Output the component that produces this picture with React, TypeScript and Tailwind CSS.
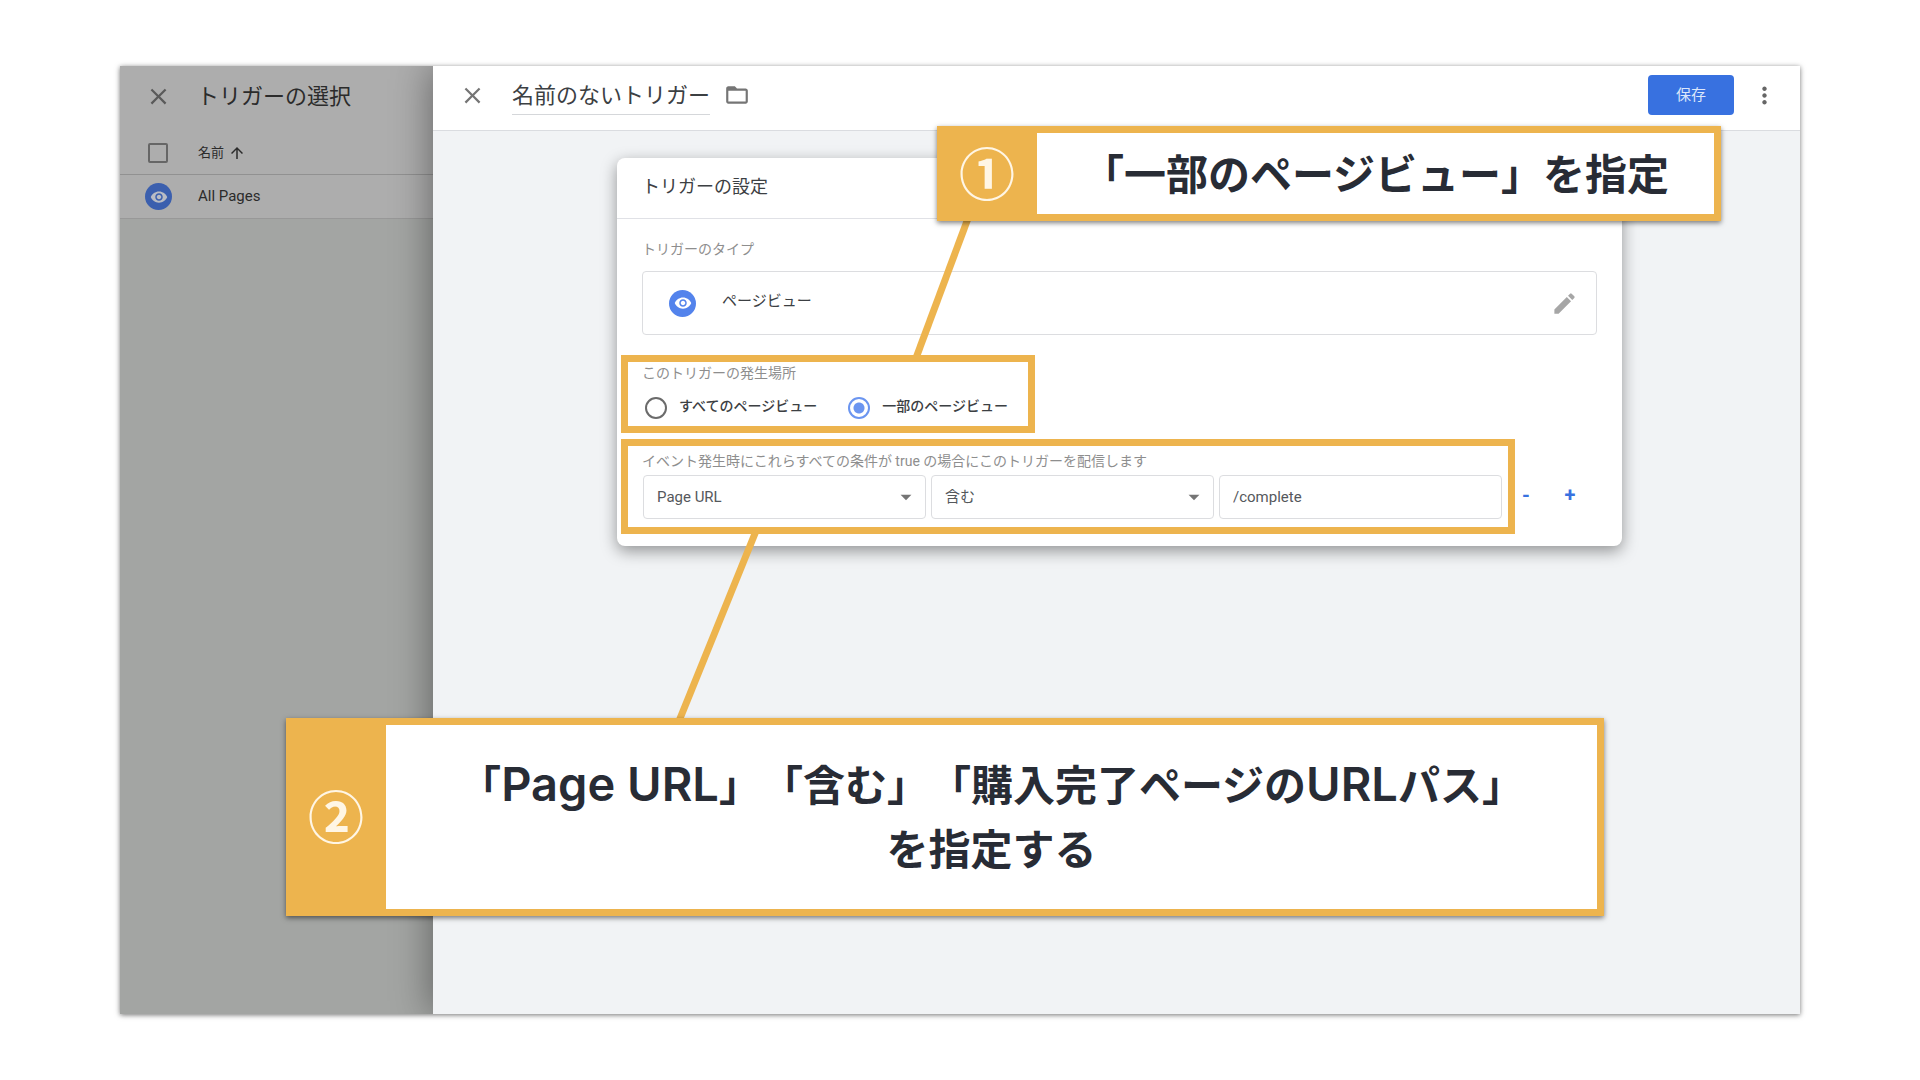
import { useState } from "react";
import type { ReactNode } from "react";
import {
  MdArrowDropDown,
  MdArrowUpward,
  MdClose,
  MdEdit,
  MdFolderOpen,
  MdMoreVert,
  MdVisibility,
} from "react-icons/md";

// opções de onde o acionador dispara
const scopes = [
  { id: "all", label: "すべてのページビュー" },
  { id: "some", label: "一部のページビュー" },
];

function EyeBadge({ className }: { className: string }) {
  return (
    <span
      className={`flex size-[27px] shrink-0 items-center justify-center rounded-full ${className}`}
    >
      <MdVisibility size={18} />
    </span>
  );
}

function SelectBox({ label, options }: { label: string; options: string[] }) {
  return (
    <div className="relative">
      <select
        aria-label={label}
        className="h-11 w-full appearance-none rounded border border-[#dcdde0] bg-white px-[13px] text-[15px] text-[#55585c]"
      >
        {options.map((option) => (
          <option key={option}>{option}</option>
        ))}
      </select>
      <MdArrowDropDown
        size={26}
        className="pointer-events-none absolute top-[9px] right-[7px] text-[#757575]"
      />
    </div>
  );
}

// balão numerado que fica por cima da tela
function Callout({
  mark,
  className,
  children,
}: {
  mark: string;
  className: string;
  children: ReactNode;
}) {
  return (
    <div
      className={`absolute flex border-[7px] border-[#edb44e] bg-white shadow-[0_2px_5px_rgba(0,0,0,0.5)] ${className}`}
    >
      <div className="flex w-[93px] shrink-0 items-center justify-center bg-[#edb44e] pt-1 pr-[7px] text-[56px] leading-none font-bold text-[#fff6e5]">
        {mark}
      </div>
      <p className="flex-1 self-center pt-0.5 text-center font-['Inter','Noto_Sans_CJK_JP',sans-serif] text-[42px] leading-[64px] font-bold text-[#282c35] [text-spacing-trim:space-all]">
        {children}
      </p>
    </div>
  );
}

// texto latino um pouco maior que o japonês dentro do balão
function Latin({ children }: { children: ReactNode }) {
  return <span className="text-[47px] leading-none font-semibold">{children}</span>;
}

export default function App() {
  const [scope, setScope] = useState("some");

  return (
    <div className="flex min-h-screen bg-white px-[120px] py-[66px] font-['Roboto','Noto_Sans_CJK_JP',sans-serif] text-[#3c4043]">
      <div className="relative flex flex-1 shadow-[0_1px_5px_rgba(0,0,0,0.55)]">
        {/* Lista de acionadores (escurecida ao fundo) */}
        <aside className="w-[313px] shrink-0 bg-[#a3a5a3] text-[#2b2b2b]">
          <div className="bg-[#adadad]">
            <div className="flex h-16 items-center gap-[25px] pb-1 pl-[25px]">
              <button aria-label="閉じる" className="text-[#5a5a5a]">
                <MdClose size={27} />
              </button>
              <h2 className="text-[22px]">トリガーの選択</h2>
            </div>
            <div className="flex h-[45px] items-center border-b border-[#919191] pt-0.5 pl-7">
              <input
                type="checkbox"
                aria-label="すべて選択"
                className="size-5 appearance-none rounded-xs border-2 border-[#666]"
              />
              <span className="ml-[30px] text-[13px]">名前</span>
              <MdArrowUpward size={18} className="ml-1" />
            </div>
            <div className="flex h-11 items-center border-b border-[#989898] pl-[25px] text-[15px]">
              <EyeBadge className="bg-[#3b5fae] text-[#b9bcc4]" />
              <span className="ml-[26px]">All Pages</span>
            </div>
          </div>
        </aside>

        <main className="relative flex-1 bg-[#f1f3f5] shadow-[-2px_0_36px_rgba(0,0,0,0.4)] [clip-path:inset(0_0_0_-60px)]">
          <header className="flex h-[65px] items-center border-b border-[#dadce0] bg-white pr-[22px] pb-1.5 pl-[26px]">
            <button aria-label="閉じる" className="text-[#757575]">
              <MdClose size={27} />
            </button>
            <input
              aria-label="トリガー名"
              defaultValue="名前のないトリガー"
              className="ml-[26px] h-[39px] w-[198px] border-b border-[#d5d7da] pb-1 text-[22px] text-[#3c4043] outline-none"
            />
            <button aria-label="フォルダ" className="ml-3.5 text-[#757575]">
              <MdFolderOpen size={26} />
            </button>
            <button className="ml-auto h-10 w-[86px] rounded bg-[#3871e0] text-[15px] text-[#dce7fb]">
              保存
            </button>
            <button aria-label="その他" className="ml-[17px] text-[#666]">
              <MdMoreVert size={27} />
            </button>
          </header>

          {/* Configuração do acionador */}
          <section className="mt-[27px] mr-[178px] ml-[184px] rounded-lg bg-white pb-[27px] shadow-[0_5px_16px_rgba(0,0,0,0.4)]">
            <h3 className="flex h-[61px] items-center border-b border-[#e0e1e6] px-[25px] pb-1 text-[18px]">
              トリガーの設定
            </h3>
            <div className="px-[25px] pt-5">
              <p className="text-[14px] leading-5 text-[#8e8e8e]">トリガーのタイプ</p>
              <div className="mt-3 flex h-16 items-center rounded border border-[#dcdde0] pr-[18px] pl-[26px]">
                <EyeBadge className="bg-[#5383ec] text-white" />
                <span className="ml-[26px] pb-1 text-[15px]">ページビュー</span>
                <button aria-label="編集" className="ml-auto text-[#a6a6a6]">
                  <MdEdit size={27} />
                </button>
              </div>

              <p className="mt-7 text-[14px] leading-5 text-[#8e8e8e]">
                このトリガーの発生場所
              </p>
              <div className="mt-3.5 flex gap-[31px] pl-[3px]">
                {scopes.map((item) => (
                  <label
                    key={item.id}
                    className="flex h-[22px] items-center gap-3 text-[14px] font-medium"
                  >
                    <input
                      type="radio"
                      name="scope"
                      checked={scope === item.id}
                      onChange={() => setScope(item.id)}
                      className="size-[22px] appearance-none rounded-full border-2 border-[#6b6b6b] bg-white checked:border-[#6b95f0] checked:bg-[radial-gradient(circle,#6b95f0_5px,#fff_6px)]"
                    />
                    <span className="pb-1">{item.label}</span>
                  </label>
                ))}
              </div>

              <p className="mt-8 text-[14px] leading-5 text-[#8e8e8e]">
                イベント発生時にこれらすべての条件が true の場合にこのトリガーを配信します
              </p>
              <div className="mt-1 flex items-center">
                <div className="grid flex-1 grid-cols-3 gap-[5px] pl-px">
                  <SelectBox label="変数" options={["Page URL", "Page Path"]} />
                  <SelectBox label="演算子" options={["含む", "含まない"]} />
                  <input
                    aria-label="値"
                    defaultValue="/complete"
                    className="h-11 w-full rounded border border-[#dcdde0] px-[13px] text-[15px] text-[#55585c]"
                  />
                </div>
                <button className="ml-0.5 w-11 pb-1 text-xl font-bold text-[#3871e0]">-</button>
                <button className="mr-[5px] w-11 pb-1 text-xl font-bold text-[#3871e0]">+</button>
              </div>
            </div>
          </section>
        </main>

        {/* Anotações por cima da tela */}
        <div className="absolute top-[289px] left-[501px] h-[78px] w-[414px] border-[7px] border-[#edb44e]" />
        <div className="absolute top-[373px] left-[501px] h-[95px] w-[894px] border-[7px] border-[#edb44e]" />
        <svg
          className="pointer-events-none absolute top-0 left-0 h-[660px] w-[900px]"
          stroke="#edb44e"
          strokeWidth="7"
        >
          <line x1="850" y1="147" x2="796" y2="292" />
          <line x1="636" y1="465" x2="559" y2="655" />
        </svg>
        <Callout mark="①" className="top-[60px] left-[817px] h-[95px] w-[784px]">
          「一部のページビュー」を指定
        </Callout>
        <Callout mark="②" className="top-[652px] left-[166px] h-[198px] w-[1318px]">
          「<Latin>Page URL</Latin>」「含む」「購入完了ページの<Latin>URL</Latin>パス」
          <br />
          を指定する
        </Callout>
      </div>
    </div>
  );
}
